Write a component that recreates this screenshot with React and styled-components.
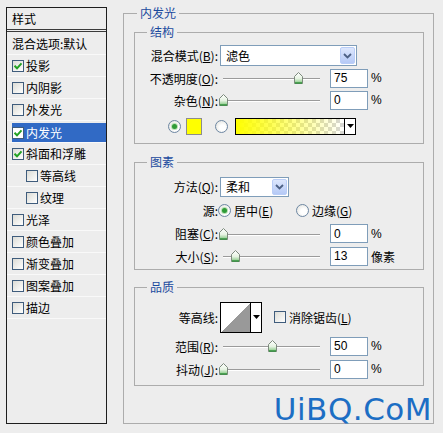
import styled, { createGlobalStyle } from "styled-components";

const GlobalStyle = createGlobalStyle`
  html, body {
    margin: 0;
    padding: 0;
    background: #ededed;
  }
  body {
    font-family: "Noto Sans CJK SC", "DejaVu Sans", sans-serif;
    font-size: 12px;
    color: #000;
  }
  * { box-sizing: border-box; }
`;

const styleItems = [
    { name: "投影", checked: true },
    { name: "内阴影" },
    { name: "外发光" },
    { name: "内发光", checked: true, active: true },
    { name: "斜面和浮雕", checked: true },
    { name: "等高线", sub: true },
    { name: "纹理", sub: true },
    { name: "光泽" },
    { name: "颜色叠加" },
    { name: "渐变叠加" },
    { name: "图案叠加" },
    { name: "描边" },
];

function Check({ checked, active }){
    return (
        <CheckBox $active={active}>
            {checked &&
                <svg width="10" height="10" viewBox="0 0 10 10">
                    <path d="M1.5 4.8 L4 7.3 L8.5 2.3" fill="none" stroke="#21a121" strokeWidth="2" />
                </svg>
            }
        </CheckBox>
    );
}

function Slider({ pos }){
    return (
        <SliderBox>
            <Thumb style={{ left: `${pos - 1}px` }}>
                <svg width="9" height="12" viewBox="0 0 9 12">
                    <defs>
                        <linearGradient id="tg" x1="0" y1="0" x2="0" y2="1">
                            <stop offset="0" stopColor="#ffffff" />
                            <stop offset="0.55" stopColor="#e6f3e2" />
                            <stop offset="1" stopColor="#7cc47a" />
                        </linearGradient>
                    </defs>
                    <path d="M0.5 4.5 L4.5 0.5 L8.5 4.5 L8.5 11.5 L0.5 11.5 Z" fill="url(#tg)" stroke="#7d8a7d" />
                    <path d="M1 11 L8 11" stroke="#2f8f3a" strokeWidth="1.4" />
                </svg>
            </Thumb>
        </SliderBox>
    );
}

function Select({ width, height, value }){
    return (
        <SelectBox $w={width} $h={height}>
            <span>{value}</span>
            <DropButton>
                <svg width="9" height="6" viewBox="0 0 9 6">
                    <path d="M1 1 L4.5 4.5 L8 1" fill="none" stroke="#4d6185" strokeWidth="1.8" />
                </svg>
            </DropButton>
        </SelectBox>
    );
}

function Arrow(){
    return (
        <svg width="7" height="4" viewBox="0 0 7 4">
            <path d="M0 0 L7 0 L3.5 4 Z" fill="#000" />
        </svg>
    );
}

function ValueRow({ height, label, pos, value, unit }){
    return (
        <Row $h={height}>
            <Label>{label}</Label>
            <Slider pos={pos} />
            <NumBox>{value}</NumBox>
            <Unit>{unit}</Unit>
        </Row>
    );
}

export default function App(){
    return (
        <Dialog>
            <GlobalStyle />
            <StylePanel>
                <PanelHeader>样式</PanelHeader>
                <PanelItem $h={23}>混合选项:默认</PanelItem>
                {styleItems.map(item => (
                    <PanelItem key={item.name} $h={22} $sub={item.sub} $active={item.active}>
                        <Check checked={item.checked} active={item.active} />
                        <span>{item.name}</span>
                    </PanelItem>
                ))}
            </StylePanel>

            <Main>
                <OuterGroup>
                    <Legend $ml={3}>内发光</Legend>

                    <Group $mt={0} $pt={5} $pb={2}>
                        <Legend $ml={12}>结构</Legend>
                        <Row $h={23}>
                            <Label>混合模式(<u>B</u>):</Label>
                            <Select width={137} height={21} value="滤色" />
                        </Row>
                        <ValueRow height={22} label={<>不透明度(<u>O</u>):</>} pos={75} value="75" unit="%" />
                        <ValueRow height={22} label={<>杂色(<u>N</u>):</>} pos={0} value="0" unit="%" />
                        <Row $h={30} $pl={33}>
                            <Radio $checked />
                            <Swatch />
                            <Radio $ml={13} />
                            <GradientBox>
                                <GradientFill />
                                <ArrowCell><Arrow /></ArrowCell>
                            </GradientBox>
                        </Row>
                    </Group>

                    <Group $mt={11} $pt={6} $pb={2}>
                        <Legend $ml={12}>图素</Legend>
                        <Row $h={23}>
                            <Label>方法(<u>Q</u>):</Label>
                            <Select width={69} height={20} value="柔和" />
                        </Row>
                        <Row $h={24}>
                            <Label>源:</Label>
                            <Option $w={78} $ml={-2}>
                                <Radio $checked />
                                <span>居中(<u>E</u>)</span>
                            </Option>
                            <Option>
                                <Radio />
                                <span>边缘(<u>G</u>)</span>
                            </Option>
                        </Row>
                        <ValueRow height={23} label={<>阻塞(<u>C</u>):</>} pos={0} value="0" unit="%" />
                        <ValueRow height={22} label={<>大小(<u>S</u>):</>} pos={12} value="13" unit="像素" />
                    </Group>

                    <Group $mt={10} $pt={6} $pb={5}>
                        <Legend $ml={12}>品质</Legend>
                        <Row $h={34}>
                            <Label>等高线:</Label>
                            <ContourPicker>
                                <ContourPreview />
                                <ArrowCell><Arrow /></ArrowCell>
                            </ContourPicker>
                            <Option $ml={12}>
                                <Check />
                                <span>消除锯齿(<u>L</u>)</span>
                            </Option>
                        </Row>
                        <ValueRow height={24} label={<>范围(<u>R</u>):</>} pos={49} value="50" unit="%" />
                        <ValueRow height={22} label={<>抖动(<u>J</u>):</>} pos={0} value="0" unit="%" />
                    </Group>

                    <Watermark>UiBQ.CoM</Watermark>
                </OuterGroup>
            </Main>
        </Dialog>
    );
}

const Dialog = styled.div`
    width: 443px;
    height: 433px;
    padding-left: 6px;
    display: flex;
    align-items: flex-start;
`;

const StylePanel = styled.div`
    width: 101px;
    height: 417px;
    margin-top: 7px;
    border: 1px solid #1e1e1e;
    display: flex;
    flex-direction: column;
    flex-shrink: 0;
`;

const PanelHeader = styled.div`
    height: 24px;
    padding-left: 5px;
    display: flex;
    align-items: center;
    border-bottom: 3px double #3a3a3a;
`;

const PanelItem = styled.div`
    height: ${p => p.$h}px;
    padding-left: ${p => p.$sub ? 19 : 5}px;
    display: flex;
    align-items: center;
    gap: 2px;
    white-space: nowrap;
    border-bottom: 1px solid #f9f9f9;
    background: ${p => p.$active ? "#316ac5" : "transparent"};
    color: ${p => p.$active ? "#fff" : "#000"};
    background-clip: content-box;
    padding-top: ${p => p.$active ? 2 : 0}px;
`;

const CheckBox = styled.span`
    width: 12px;
    height: 12px;
    flex-shrink: 0;
    display: inline-flex;
    align-items: center;
    justify-content: center;
    border: 1px solid #3f5c7c;
    background: ${p => p.$active ? "#fff" : "linear-gradient(135deg, #dcdcd6, #ffffff)"};
`;

const Main = styled.div`
    margin-left: 16px;
    margin-top: 6px;
    width: 311px;
`;

const OuterGroup = styled.fieldset`
    position: relative;
    height: 418px;
    margin: 0;
    padding: 5px 9px 0 10px;
    border: 1px solid #acacac;
    min-width: 0;
`;

const Legend = styled.legend`
    margin-left: ${p => p.$ml}px;
    padding: 0 3px;
    line-height: 14px;
    color: #1b4a9e;
`;

const Group = styled.fieldset`
    margin: ${p => p.$mt}px 0 0;
    padding: ${p => p.$pt}px 0 ${p => p.$pb}px;
    border: 1px solid #acacac;
    min-width: 0;
`;

const Row = styled.div`
    height: ${p => p.$h}px;
    padding-left: ${p => p.$pl || 0}px;
    display: flex;
    align-items: center;
    white-space: nowrap;
`;

const Label = styled.div`
    width: 83px;
    margin-right: 2px;
    flex-shrink: 0;
    text-align: right;
`;

const SelectBox = styled.div`
    width: ${p => p.$w}px;
    height: ${p => p.$h}px;
    padding: 1px 1px 1px 5px;
    display: flex;
    align-items: center;
    justify-content: space-between;
    border: 1px solid #7f9db9;
    background: #fff;
`;

const DropButton = styled.div`
    width: 15px;
    height: 100%;
    display: flex;
    align-items: center;
    justify-content: center;
    border: 1px solid #b9cdf7;
    border-radius: 2px;
    background: linear-gradient(#dde7fd, #b5c9f6);
`;

const SliderBox = styled.div`
    position: relative;
    width: 102px;
    height: 14px;
    flex-shrink: 0;

    &::before{
        content: "";
        position: absolute;
        left: 3px;
        right: 2px;
        top: 7px;
        height: 1px;
        background: #9b9b9b;
        box-shadow: 0 1px 0 #fff;
    }
`;

const Thumb = styled.div`
    position: absolute;
    top: 1px;
    width: 9px;
    height: 12px;
    display: flex;
`;

const NumBox = styled.div`
    width: 38px;
    height: 19px;
    margin-left: 8px;
    padding-left: 3px;
    display: flex;
    align-items: center;
    border: 1px solid #7f9db9;
    background: #fff;
    font-family: "Liberation Sans", sans-serif;
    font-size: 12px;
`;

const Unit = styled.span`
    margin-left: 3px;
    font-family: "Liberation Sans", "Noto Sans CJK SC", sans-serif;
`;

const Radio = styled.span`
    width: 13px;
    height: 13px;
    margin-left: ${p => p.$ml || 0}px;
    flex-shrink: 0;
    border-radius: 50%;
    border: 1px solid #6d87a3;
    background: radial-gradient(circle at 60% 60%, #ffffff 30%, #dcdcd6);
    display: inline-flex;
    align-items: center;
    justify-content: center;

    &::after{
        content: "";
        width: 5px;
        height: 5px;
        border-radius: 50%;
        background: ${p => p.$checked ? "#2f9b37" : "transparent"};
        box-shadow: ${p => p.$checked ? "0 0 0 1px #b8e0b4" : "none"};
    }
`;

const Swatch = styled.span`
    width: 16px;
    height: 17px;
    margin-left: 5px;
    background: #ffff00;
    border: 1px solid #8c8c8c;
`;

const GradientBox = styled.div`
    width: 121px;
    height: 17px;
    margin-left: 7px;
    display: flex;
    border: 1px solid #000;
`;

const GradientFill = styled.div`
    flex: 1;
    background:
        linear-gradient(to right, #ffff00, rgba(255, 255, 0, 0)),
        repeating-conic-gradient(#d6d6d6 0 25%, #ffffff 0 50%) 0 0 / 8px 8px;
`;

const ArrowCell = styled.div`
    width: 11px;
    display: flex;
    align-items: center;
    justify-content: center;
    border-left: 1px solid #000;
    background: #fff;
`;

const Option = styled.div`
    width: ${p => p.$w ? `${p.$w}px` : "auto"};
    margin-left: ${p => p.$ml || 0}px;
    display: flex;
    align-items: center;
    gap: 3px;
`;

const ContourPicker = styled.div`
    width: 42px;
    height: 31px;
    display: flex;
    border: 1px solid #000;
`;

const ContourPreview = styled.div`
    flex: 1;
    background: linear-gradient(to bottom right, #ffffff 50%, #999999 50%);
`;

const Watermark = styled.div`
    position: absolute;
    right: 1px;
    bottom: -2px;
    font-family: "DejaVu Sans", sans-serif;
    font-size: 31px;
    line-height: 1;
    letter-spacing: 0.5px;
    color: #1c6ec4;
`;
